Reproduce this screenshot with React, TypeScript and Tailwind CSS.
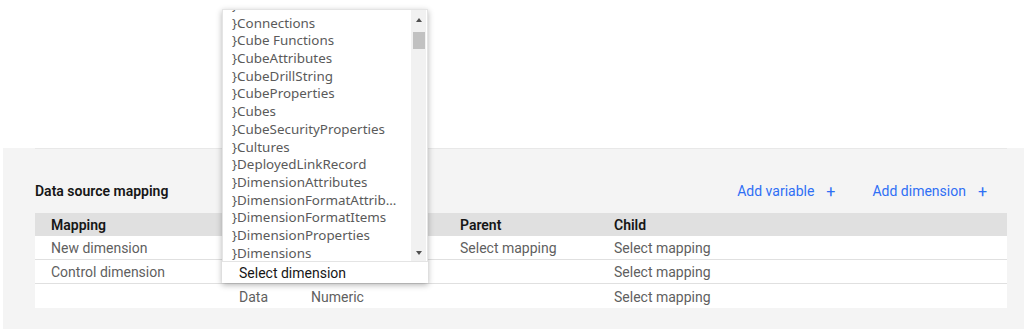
import React from "react";

const options = [
  "}Clients",
  "}Connections",
  "}Cube Functions",
  "}CubeAttributes",
  "}CubeDrillString",
  "}CubeProperties",
  "}Cubes",
  "}CubeSecurityProperties",
  "}Cultures",
  "}DeployedLinkRecord",
  "}DimensionAttributes",
  "}DimensionFormatAttributes",
  "}DimensionFormatItems",
  "}DimensionProperties",
  "}Dimensions",
];

const rows = [
  { mapping: "New dimension", dim: "", type: "", parent: "Select mapping", child: "Select mapping" },
  { mapping: "Control dimension", dim: "", type: "", parent: "", child: "Select mapping" },
  { mapping: "", dim: "Data", type: "Numeric", parent: "", child: "Select mapping" },
];

const cols = "grid grid-cols-[188px_72px_149px_154px_1fr]";

function DimensionDropdown() {
  return (
    <div className="absolute left-[222px] top-[9px] w-[206px] shadow-[0_2px_6px_rgba(0,0,0,0.3)]">
      <div className="relative h-[253px] overflow-hidden bg-white border border-[#e4e4e4]">
        <div className="-mt-[13px] pr-[24px]">
          {options.map((o) => (
            <div
              key={o}
              className="h-[17.7px] pl-[9px] font-['Noto_Sans',sans-serif] text-[13.4px] leading-[17.7px] text-[#5a5a5a] truncate"
            >
              {o}
            </div>
          ))}
        </div>
        {/* scrollbar */}
        <div className="absolute right-[1px] top-0 bottom-0 w-[15px] bg-[#f1f1f1] flex flex-col items-center">
          <div className="mt-[8px] w-0 h-0 border-l-[3.5px] border-r-[3.5px] border-b-[4px] border-l-transparent border-r-transparent border-b-[#505050]" />
          <div className="mt-[10px] w-[12px] h-[17px] bg-[#c1c1c1]" />
          <div className="mt-auto mb-[6px] w-0 h-0 border-l-[3.5px] border-r-[3.5px] border-t-[4px] border-l-transparent border-r-transparent border-t-[#505050]" />
        </div>
      </div>
      <div className="h-[21px] bg-white pl-[17px] text-[14px] leading-[22px] text-[#161616]">
        Select dimension
      </div>
    </div>
  );
}

export default function App() {
  return (
    <div className="relative w-[1024px] h-[329px] bg-white overflow-hidden font-['Roboto',sans-serif]">
      <div className="h-[148px]" />
      <div className="ml-[3px] h-[181px] bg-[#f4f4f4]">
        <div className="ml-[32px] mr-[17px] border-t border-[#e8e8e8]">
          <div className="flex items-center h-[64px] pt-[21px]">
            <div className="text-[14px] font-semibold text-[#161616]">Data source mapping</div>
            <div className="ml-auto flex items-center gap-[37px] pr-[20px] text-[14px] text-[#2f6ff5]">
              <span className="flex items-center gap-[12px]">
                Add variable <span className="text-[16px] leading-none">+</span>
              </span>
              <span className="flex items-center gap-[12px]">
                Add dimension <span className="text-[16px] leading-none">+</span>
              </span>
            </div>
          </div>
          <div className={`${cols} h-[23px] items-center bg-[#e0e0e0] text-[14px] font-semibold text-[#161616]`}>
            <div className="pl-[16px] pt-[2px]">Mapping</div>
            <div />
            <div />
            <div className="pl-[16px] pt-[2px]">Parent</div>
            <div className="pl-[16px] pt-[2px]">Child</div>
          </div>
          {rows.map((r, i) => (
            <div
              key={i}
              className={`${cols} h-[24px] items-center bg-white text-[14px] text-[#5f5f5f] ${i < rows.length - 1 ? "border-b border-[#e0e0e0]" : ""}`}
            >
              <div className="pl-[16px] pt-[2px]">{r.mapping}</div>
              <div className="pl-[16px] pt-[2px]">{r.dim}</div>
              <div className="pl-[16px] pt-[2px]">{r.type}</div>
              <div className="pl-[16px] pt-[2px]">{r.parent}</div>
              <div className="pl-[16px] pt-[2px]">{r.child}</div>
            </div>
          ))}
        </div>
      </div>
      <DimensionDropdown />
    </div>
  );
}
